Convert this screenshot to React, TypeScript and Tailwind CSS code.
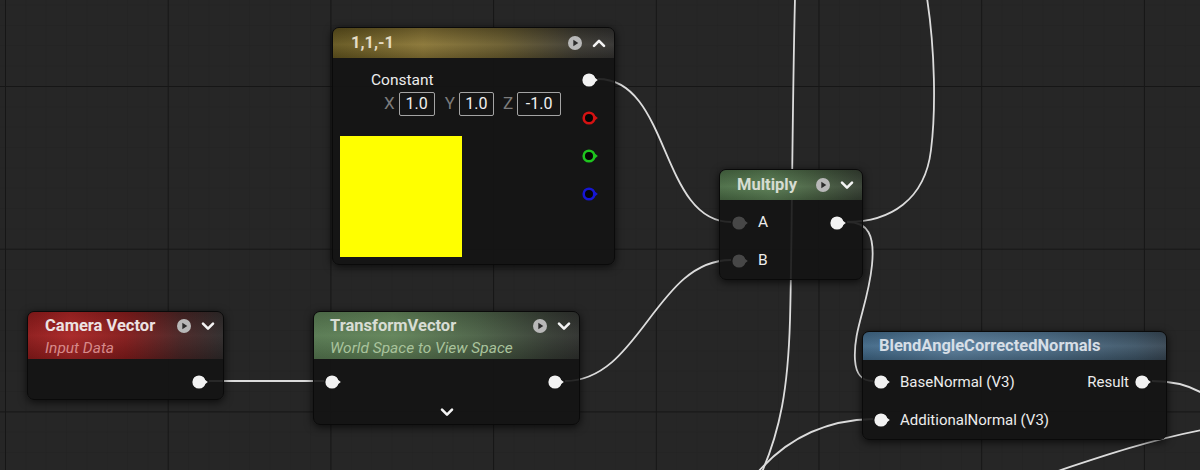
import React from "react";

type PinKind = "white" | "grey" | "red" | "green" | "blue";

const ringColors: Record<string, string> = {
  red: "#d41212",
  green: "#1ec41e",
  blue: "#1616d2",
};

const Pin = ({ kind = "white" }: { kind?: PinKind }) => {
  if (kind === "white" || kind === "grey") {
    const fill = kind === "white" ? "#f2f2f2" : "#474747";
    return (
      <svg width="16" height="14" viewBox="0 0 16 14" className="shrink-0 overflow-visible">
        <circle cx="7" cy="7" r="6.6" fill={fill} />
        <path d="M12.2 4.2 L15.8 7 L12.2 9.8 Z" fill={fill} />
      </svg>
    );
  }
  const c = ringColors[kind];
  return (
    <svg width="16" height="14" viewBox="0 0 16 14" className="shrink-0 overflow-visible">
      <path d="M12 3.8 L15.8 7 L12 10.2 Z" fill={c} />
      <circle cx="7" cy="7" r="5.3" fill="#050505" stroke={c} strokeWidth="2.6" />
    </svg>
  );
};

const PlayIcon = () => (
  <svg width="14" height="14" viewBox="0 0 14 14" className="overflow-visible">
    <circle cx="7" cy="7" r="7" fill="#b8b8b8" />
    <path d="M5.3 3.7 L10.3 7 L5.3 10.3 Z" fill="#2b2b2b" />
  </svg>
);

const Chevron = ({ up = false }: { up?: boolean }) => (
  <svg width="14" height="14" viewBox="0 0 14 14" className="overflow-visible">
    <polyline
      points={up ? "2,9.8 7,4.8 12,9.8" : "2,4.6 7,9.6 12,4.6"}
      fill="none"
      stroke="#f4f4f4"
      strokeWidth="2.6"
      strokeLinecap="round"
      strokeLinejoin="round"
    />
  </svg>
);

const HeaderIcons = ({ up = false }: { up?: boolean }) => (
  <div className="ml-auto flex items-center gap-[10px] pr-[8px]">
    <PlayIcon />
    <Chevron up={up} />
  </div>
);

const nodeBody =
  "absolute flex flex-col overflow-hidden rounded-[7px] border border-[#0a0a0a] bg-[#141414]/90 shadow-[0_2px_8px_rgba(0,0,0,0.7)]";

const GraphBackground = () => (
  <svg className="absolute inset-0" width="1200" height="470">
    <defs>
      <pattern id="minor" x="5" y="4.6" width="20.34" height="20.34" patternUnits="userSpaceOnUse">
        <path d="M0 0 L20.34 0 M0 0 L0 20.34" stroke="#222222" strokeWidth="1" />
      </pattern>
      <pattern id="major" x="5" y="86" width="162.7" height="162.7" patternUnits="userSpaceOnUse">
        <path d="M0 0 L162.7 0 M0 0 L0 162.7" stroke="#161616" strokeWidth="2" />
      </pattern>
    </defs>
    <rect width="1200" height="470" fill="#262626" />
    <rect width="1200" height="470" fill="url(#minor)" />
    <rect width="1200" height="470" fill="url(#major)" />
  </svg>
);

const Wires = () => (
  <svg className="absolute inset-0" width="1200" height="470" fill="none" stroke="#dcdcdc" strokeWidth="1.8">
    {/* constant -> multiply A */}
    <path d="M598 79 C670 79, 660 222, 731 222" />
    {/* transform -> multiply B */}
    <path d="M565 381 C640 381, 656 260, 731 260" />
    {/* camera -> transform */}
    <path d="M209 381 L324 381" />
    {/* multiply out, going up */}
    <path d="M847 222 C890 222, 925 200, 931 150 C936 110, 935 50, 927 -2" />
    {/* multiply out -> base normal */}
    <path d="M847 222 C868 222, 875 235, 872 265 C868 305, 853 330, 855 360 C856 375, 862 381, 873 381" />
    {/* long wire from above */}
    <path d="M795 -2 C792 120, 792 250, 790 320 C788 390, 780 430, 762 472" />
    {/* additional normal */}
    <path d="M873 419 C822 420, 786 440, 758 472" />
    {/* result */}
    <path d="M1152 381 C1175 381, 1190 386, 1202 393" />
    <path d="M1055 472 C1100 457, 1150 440, 1202 430" />
  </svg>
);

const ValueBox = ({ v, w }: { v: string; w: string }) => (
  <div
    className={`${w} ml-[4px] flex h-[24px] items-center justify-center rounded-[2px] border-[1.5px] border-[#a4a4a4] text-[16px] leading-none text-[#f0f0f0]`}
  >
    {v}
  </div>
);

const ConstantNode = () => (
  <div className={`${nodeBody} left-[332px] top-[27px] h-[238px] w-[283px]`}>
    <div className="flex h-[30px] shrink-0 items-center pl-[18px] bg-[linear-gradient(180deg,rgba(0,0,0,0.25),rgba(255,255,255,0.04)_55%,rgba(0,0,0,0.2)),linear-gradient(90deg,#64561f,#8a7636_32%,#6a5d2f_60%,#3c3a33_88%,#343331)]">
      <span className="text-[16.5px] font-bold text-[#e4dcc4]">1,1,-1</span>
      <HeaderIcons up />
    </div>
    <div className="flex flex-1 justify-between">
      <div className="flex flex-col pt-[12px]">
        <div className="ml-[38px] text-[15.5px] leading-[20px] text-[#ececec]">Constant</div>
        <div className="ml-[51px] mt-[1px] flex items-center text-[17px] text-[#7c7c7c]">
          <span>X</span>
          <ValueBox v="1.0" w="w-[36px]" />
          <span className="ml-[10px]">Y</span>
          <ValueBox v="1.0" w="w-[35px]" />
          <span className="ml-[9px]">Z</span>
          <ValueBox v="-1.0" w="w-[44px]" />
        </div>
        <div className="ml-[7px] mt-[19px] h-[121px] w-[122px] bg-[#ffff00]" />
      </div>
      <div className="flex flex-col gap-[24px] pr-[16px] pt-[15px]">
        <Pin kind="white" />
        <Pin kind="red" />
        <Pin kind="green" />
        <Pin kind="blue" />
      </div>
    </div>
  </div>
);

const MultiplyNode = () => (
  <div className={`${nodeBody} left-[719px] top-[169px] h-[111px] w-[144px]`}>
    <div className="flex h-[30px] shrink-0 items-center pl-[17px] bg-[linear-gradient(180deg,rgba(0,0,0,0.2),rgba(255,255,255,0.04)_55%,rgba(0,0,0,0.2)),linear-gradient(90deg,#4b6d46,#5a7e54_35%,#4a6344_65%,#364033)]">
      <span className="text-[16.5px] font-bold text-[#d6dcd2]">Multiply</span>
      <HeaderIcons />
    </div>
    <div className="flex flex-col gap-[14px] pt-[11px]">
      <div className="flex h-[24px] items-center pl-[12px] pr-[16px]">
        <Pin kind="grey" />
        <span className="ml-[10px] text-[15.5px] text-[#ececec]">A</span>
        <div className="ml-auto">
          <Pin kind="white" />
        </div>
      </div>
      <div className="flex h-[24px] items-center pl-[12px]">
        <Pin kind="grey" />
        <span className="ml-[10px] text-[15.5px] text-[#ececec]">B</span>
      </div>
    </div>
  </div>
);

const CameraNode = () => (
  <div className={`${nodeBody} left-[27px] top-[311px] h-[89px] w-[197px]`}>
    <div className="flex h-[47px] shrink-0 items-start pl-[17px] pt-[4px] bg-[linear-gradient(180deg,rgba(0,0,0,0.15),rgba(255,255,255,0.03)_50%,rgba(0,0,0,0.2)),linear-gradient(90deg,#8e1b1b,#a82525_22%,#851c1c_50%,#4a2525_78%,#2f2b2b)]">
      <div className="flex flex-col">
        <span className="text-[16.5px] font-bold leading-[20px] text-[#ece2e2]">Camera Vector</span>
        <span className="mt-[3px] text-[15.5px] italic leading-[18px] text-[#d78a8a]">Input Data</span>
      </div>
      <div className="ml-auto flex h-[20px] items-center">
        <HeaderIcons />
      </div>
    </div>
    <div className="flex justify-end pr-[15px] pt-[16px]">
      <Pin kind="white" />
    </div>
  </div>
);

const TransformNode = () => (
  <div className={`${nodeBody} left-[313px] top-[311px] h-[114px] w-[267px]`}>
    <div className="flex h-[47px] shrink-0 items-start pl-[16px] pt-[4px] bg-[linear-gradient(180deg,rgba(0,0,0,0.15),rgba(255,255,255,0.03)_50%,rgba(0,0,0,0.2)),linear-gradient(90deg,#587a52,#628459_30%,#4c6247_62%,#363c34_90%,#30322f)]">
      <div className="flex flex-col">
        <span className="text-[16.5px] font-bold leading-[20px] text-[#d8ddd4]">TransformVector</span>
        <span className="mt-[3px] text-[15.5px] italic leading-[18px] text-[#a9c39c]">World Space to View Space</span>
      </div>
      <div className="ml-auto flex h-[20px] items-center">
        <HeaderIcons />
      </div>
    </div>
    <div className="flex items-center justify-between pl-[11px] pr-[15px] pt-[16px]">
      <Pin kind="white" />
      <Pin kind="white" />
    </div>
    <div className="flex justify-center pt-[16px]">
      <Chevron />
    </div>
  </div>
);

const BlendNode = () => (
  <div className={`${nodeBody} left-[862px] top-[331px] h-[109px] w-[305px]`}>
    <div className="flex h-[28px] shrink-0 items-center pl-[16px] bg-[linear-gradient(180deg,rgba(0,0,0,0.15),rgba(255,255,255,0.05)_50%,rgba(0,0,0,0.2)),linear-gradient(90deg,#3f6685,#5a7f9d_30%,#4d6f8a_60%,#3d5466_90%,#364552)]">
      <span className="text-[16.5px] font-bold text-[#d6dee6]">BlendAngleCorrectedNormals</span>
    </div>
    <div className="flex flex-col gap-[14px] pt-[10px]">
      <div className="flex h-[24px] items-center pl-[11px] pr-[15px]">
        <Pin kind="white" />
        <span className="ml-[10px] text-[15px] text-[#ececec]">BaseNormal (V3)</span>
        <span className="ml-auto mr-[6px] text-[15px] text-[#ececec]">Result</span>
        <Pin kind="white" />
      </div>
      <div className="flex h-[24px] items-center pl-[11px]">
        <Pin kind="white" />
        <span className="ml-[10px] text-[15px] text-[#ececec]">AdditionalNormal (V3)</span>
      </div>
    </div>
  </div>
);

export default function App() {
  return (
    <div className="relative h-[470px] w-[1200px] overflow-hidden bg-[#262626] font-[Roboto,sans-serif]">
      <GraphBackground />
      <Wires />
      <ConstantNode />
      <MultiplyNode />
      <CameraNode />
      <TransformNode />
      <BlendNode />
    </div>
  );
}
